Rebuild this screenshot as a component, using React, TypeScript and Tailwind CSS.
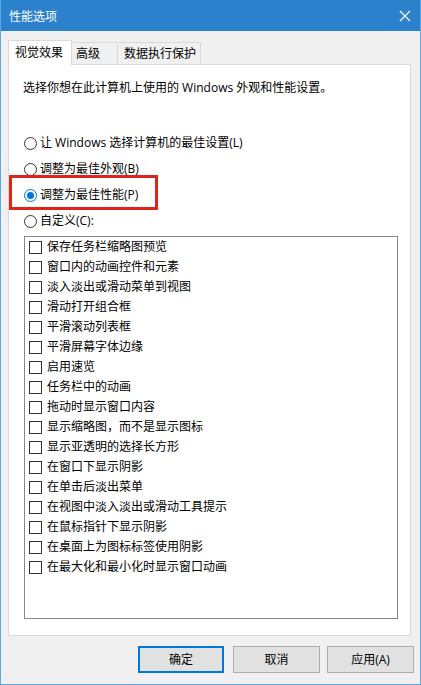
import { useState } from "react";

const effects = [
  "保存任务栏缩略图预览",
  "窗口内的动画控件和元素",
  "淡入淡出或滑动菜单到视图",
  "滑动打开组合框",
  "平滑滚动列表框",
  "平滑屏幕字体边缘",
  "启用速览",
  "任务栏中的动画",
  "拖动时显示窗口内容",
  "显示缩略图，而不是显示图标",
  "显示亚透明的选择长方形",
  "在窗口下显示阴影",
  "在单击后淡出菜单",
  "在视图中淡入淡出或滑动工具提示",
  "在鼠标指针下显示阴影",
  "在桌面上为图标标签使用阴影",
  "在最大化和最小化时显示窗口动画",
];

const modes = [
  "让 Windows 选择计算机的最佳设置(L)",
  "调整为最佳外观(B)",
  "调整为最佳性能(P)",
  "自定义(C):",
];

function Radio({ checked }: { checked: boolean }) {
  return (
    <span
      className={`flex h-[13px] w-[13px] shrink-0 items-center justify-center rounded-full border bg-white ${
        checked ? "border-[#0078d7]" : "border-[#333333]"
      }`}
    >
      {checked && <span className="h-[7px] w-[7px] rounded-full bg-[#0078d7]" />}
    </span>
  );
}

export default function App() {
  const [mode, setMode] = useState(2);

  return (
    <div className="relative flex h-[685px] w-[421px] flex-col border-x border-b border-[#5aa9e6] bg-[#f0f0f0] font-['Open_Sans','Noto_Sans_CJK_SC',sans-serif] text-[12px] leading-[16px] text-black">
      {/* title bar */}
      <div className="flex h-[31px] shrink-0 items-center justify-between bg-[#2b81cb] pl-[8px] pr-[9px] text-white">
        <span className="font-['Noto_Sans_CJK_SC',sans-serif]">性能选项</span>
        <svg width="12" height="12" viewBox="0 0 12 12">
          <path d="M1 1 L11 11 M11 1 L1 11" stroke="#ffffff" strokeWidth="1.2" />
        </svg>
      </div>

      <div className="flex flex-col pl-[7px] pr-[9px] pt-[9px]">
        {/* tabs */}
        <div className="flex items-end">
          <div className="relative z-10 -mb-px flex h-[25px] w-[64px] items-center border-x border-t border-[#d9d9d9] bg-white pl-[6px]">
            视觉效果
          </div>
          <div className="flex h-[22px] w-[46px] items-center border-r border-t border-[#d9d9d9] pl-[4px]">
            高级
          </div>
          <div className="flex h-[22px] w-[83px] items-center border-r border-t border-[#d9d9d9] pl-[6px]">
            数据执行保护
          </div>
        </div>

        {/* panel */}
        <div className="flex h-[572px] flex-col border border-[#d9d9d9] bg-white">
          <p className="ml-[14px] mt-[15px]">选择你想在此计算机上使用的 Windows 外观和性能设置。</p>

          <div className="mt-[34px] flex flex-col">
            {modes.map((m, i) => (
              <label
                key={m}
                onClick={() => setMode(i)}
                className="flex h-[26px] cursor-default items-center gap-[3px] pl-[15px]"
              >
                <Radio checked={mode === i} />
                <span>{m}</span>
              </label>
            ))}
          </div>

          <div className="ml-[15px] mt-[2px] h-[383px] w-[374px] border border-[#828790] bg-white">
            {effects.map((e) => (
              <div key={e} className="flex h-[20px] items-center gap-[5px] pl-[4px]">
                <span className="h-[13px] w-[13px] shrink-0 border border-[#333333] bg-white" />
                <span>{e}</span>
              </div>
            ))}
          </div>
        </div>
      </div>

      {/* buttons */}
      <div className="mt-[10px] flex justify-end pr-[6px]">
        <button className="h-[27px] w-[86px] border-2 border-[#0078d7] bg-[#e1e1e1]">确定</button>
        <button className="ml-[9px] h-[27px] w-[87px] border border-[#adadad] bg-[#e1e1e1]">取消</button>
        <button className="ml-[7px] h-[27px] w-[87px] border border-[#adadad] bg-[#e1e1e1]">应用(A)</button>
      </div>

      {/* annotation */}
      <div className="pointer-events-none absolute left-[8px] top-[175px] h-[35px] w-[149px] border-[3px] border-[#e2231a]" />
    </div>
  );
}
